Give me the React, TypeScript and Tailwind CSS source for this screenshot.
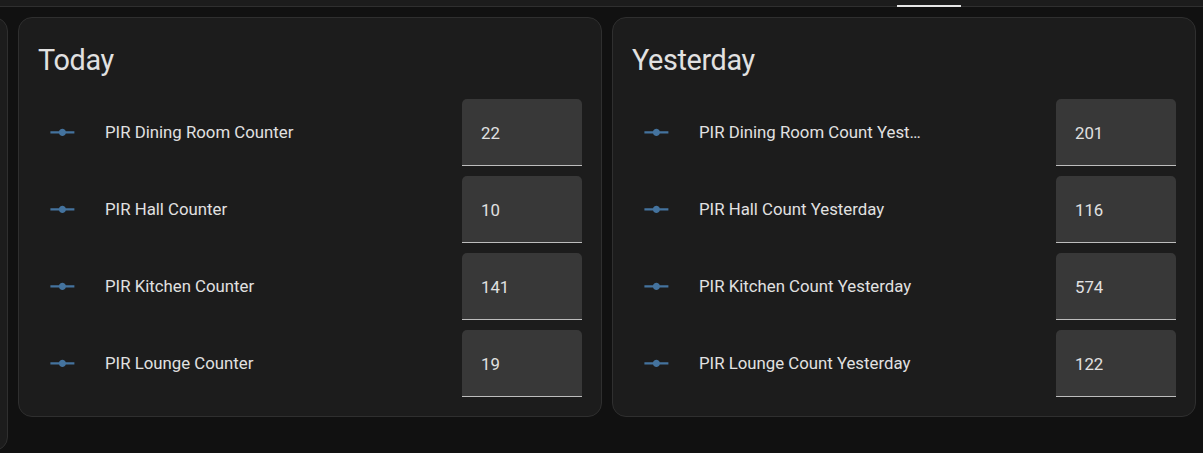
import React from 'react';

type Row = { name: string; value: string };

const today: Row[] = [
  { name: 'PIR Dining Room Counter', value: '22' },
  { name: 'PIR Hall Counter', value: '10' },
  { name: 'PIR Kitchen Counter', value: '141' },
  { name: 'PIR Lounge Counter', value: '19' },
];

const yesterday: Row[] = [
  { name: 'PIR Dining Room Count Yesterday', value: '201' },
  { name: 'PIR Hall Count Yesterday', value: '116' },
  { name: 'PIR Kitchen Count Yesterday', value: '574' },
  { name: 'PIR Lounge Count Yesterday', value: '122' },
];

function RayVertex() {
  return (
    <svg viewBox="0 0 24 24" className="h-[28.8px] w-[28.8px]" fill="#44739e">
      <path d="M2 11H9.17C9.58 9.83 10.69 9 12 9S14.42 9.83 14.83 11H22V13H14.83C14.42 14.17 13.31 15 12 15S9.58 14.17 9.17 13H2V11Z" />
    </svg>
  );
}

function EntityRow({ row }: { row: Row }) {
  return (
    <div className="flex h-[67px] items-center">
      <div className="flex w-[48px] shrink-0 items-center justify-center">
        <RayVertex />
      </div>
      <div className="ml-[19px] w-[224px] truncate pt-[1px] text-[16.8px] text-[#e1e1e1]">{row.name}</div>
      <div className="ml-auto flex h-[67px] w-[120px] items-center rounded-t-[5px] border-b border-[#bdbdbd] bg-[#383838] pl-[19px] pt-[3px] text-[16.8px] text-[#e1e1e1]">
        {row.value}
      </div>
    </div>
  );
}

function EntitiesCard({ title, rows }: { title: string; rows: Row[] }) {
  return (
    <div className="h-[400px] rounded-[14px] border border-[#2f2f2f] bg-[#1c1c1c] px-[19px] pb-[19px]">
      <div className="pt-[14px] text-[28.8px] leading-[57.6px] tracking-[-0.012em] text-[#e1e1e1]">{title}</div>
      <div className="mt-[9px] flex flex-col gap-[10px]">
        {rows.map((r) => (
          <EntityRow key={r.name} row={r} />
        ))}
      </div>
    </div>
  );
}

export default function App() {
  return (
    <div
      className="h-[453px] w-[1203px] overflow-hidden bg-[#111111]"
      style={{ fontFamily: 'Roboto, "Noto Sans", sans-serif' }}
    >
      <div className="flex h-[7px] items-end border-b border-[#2f2f2f] bg-[#1c1c1c]">
        <div className="ml-[897px] h-[2px] w-[64px] translate-y-[1px] bg-[#e6e6e6]" />
      </div>
      <div className="ml-[-576px] mt-[10px] grid grid-cols-[584px_584px_584px] gap-[10px]">
        <div className="h-[434px] rounded-[14px] border border-[#2f2f2f] bg-[#1c1c1c]" />
        <EntitiesCard title="Today" rows={today} />
        <EntitiesCard title="Yesterday" rows={yesterday} />
      </div>
    </div>
  );
}
